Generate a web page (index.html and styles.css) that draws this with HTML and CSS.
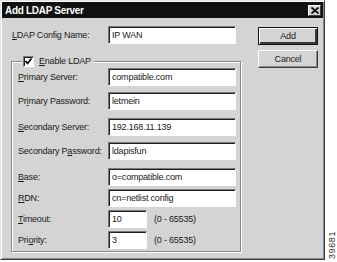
FILE: index.html
```html
<!doctype html>
<html>
<head>
<meta charset="utf-8">
<title>Add LDAP Server</title>
<link rel="stylesheet" href="styles.css">
</head>
<body>
<div class="page">
	<div class="dialog">
		<div class="titlebar">
			<span class="title">Add LDAP Server</span>
			<span class="close"><svg width="8" height="7" viewBox="0 0 8 7"><path d="M0.5 0.5 L7.5 6.5 M7.5 0.5 L0.5 6.5" stroke="#000" stroke-width="1.6"/></svg></span>
		</div>
		<div class="content">
			<div class="form">
				<div class="row top">
					<label><u>L</u>DAP Config Name:</label>
					<div class="field">IP WAN</div>
				</div>
				<fieldset class="group">
					<legend><span class="check"><svg width="9" height="9" viewBox="0 0 9 9"><path d="M1.5 4 L3.5 6.5 L7.5 1.5" fill="none" stroke="#000" stroke-width="1.7"/></svg></span><u>E</u>nable LDAP</legend>
					<div class="row first">
						<label><u>P</u>rimary Server:</label>
						<div class="field">compatible.com</div>
					</div>
					<div class="row">
						<label>Pr<u>i</u>mary Password:</label>
						<div class="field">letmein</div>
					</div>
					<div class="row sep">
						<label><u>S</u>econdary Server:</label>
						<div class="field">192.168.11.139</div>
					</div>
					<div class="row">
						<label>Secondary P<u>a</u>ssword:</label>
						<div class="field">ldapisfun</div>
					</div>
					<div class="row sep">
						<label><u>B</u>ase:</label>
						<div class="field">o=compatible.com</div>
					</div>
					<div class="row tight">
						<label><u>R</u>DN:</label>
						<div class="field">cn=netlist config</div>
					</div>
					<div class="row tight">
						<label><u>T</u>imeout:</label>
						<div class="field short">10</div>
						<span class="range">(0 - 65535)</span>
					</div>
					<div class="row tight">
						<label>Pri<u>o</u>rity:</label>
						<div class="field short">3</div>
						<span class="range">(0 - 65535)</span>
					</div>
				</fieldset>
			</div>
			<div class="buttons">
				<div class="btn default">Add</div>
				<div class="btn">Cancel</div>
			</div>
		</div>
	</div>
	<div class="figno">39681</div>
</div>
</body>
</html>
```
FILE: styles.css
```css
*{ margin:0; padding:0; box-sizing:border-box; }
body{ background:#fff; font-family:"Liberation Sans", Arial, sans-serif; font-size:9px; letter-spacing:-0.2px; color:#1a1a1a; }
.page{ display:flex; align-items:flex-end; }
.dialog{ width:327px; height:260px; background:#d4d4d4; border:1px solid; border-color:#e4e4e4 #3a3a3a #3a3a3a #e4e4e4; box-shadow:inset 1px 1px 0 #fff, inset -1px -1px 0 #8a8a8a; padding:0 1px 0 1px; display:flex; flex-direction:column; }
.titlebar{ height:16px; margin-top:1px; background:#111; display:flex; align-items:center; justify-content:space-between; padding:0 2px 0 3px; }
.title{ color:#fff; font-weight:bold; font-size:10px; letter-spacing:-0.3px; }
.close{ width:13px; height:11px; background:#d4d4d4; border:1px solid; border-color:#fff #404040 #404040 #fff; display:flex; align-items:center; justify-content:center; }
.content{ display:flex; padding:8px 0 0 9px; flex:1; }
.form{ width:230px; }
.row{ display:flex; align-items:center; height:18px; }
.row label{ width:90px; }
.row.top{ padding-left:1px; }
.row.top label{ width:96px; }
.field{ width:128px; height:18px; background:#fff; border:1px solid; border-color:#7a7a7a #fff #fff #7a7a7a; box-shadow:inset 1px 1px 0 #202020; padding:2px 0 0 3px; line-height:13px; white-space:nowrap; overflow:hidden; }
.field.short{ width:39px; }
.range{ margin-left:7px; }
.group{ margin-top:11px; border:1px solid #8a8a8a; box-shadow:1px 1px 0 #fff, inset 1px 1px 0 #fff; padding:0 4px 3px 6px; height:197px; }
.group legend{ margin-left:4px; padding:0 3px 0 1px; background:#d4d4d4; display:flex; align-items:center; height:12px; }
.check{ width:11px; height:11px; background:#fff; border:1px solid; border-color:#7a7a7a #fff #fff #7a7a7a; box-shadow:inset 1px 1px 0 #202020; display:flex; align-items:center; justify-content:center; margin-right:5px; }
.row.first{ margin-top:1px; }
.row + .row{ margin-top:6px; }
.row.sep{ margin-top:8px; }
.row.tight{ margin-top:3px; }
.buttons{ margin-left:17px; padding-top:1px; display:flex; flex-direction:column; gap:5px; }
.btn{ width:60px; height:18px; display:flex; align-items:center; justify-content:center; border:1px solid; border-color:#fff #3a3a3a #3a3a3a #fff; box-shadow:inset -1px -1px 0 #8a8a8a; }
.btn.default{ border:1px solid #111; box-shadow:inset 1px 1px 0 #fff, inset -2px -2px 0 #3a3a3a; }
.figno{ margin:0 0 1px 2px; writing-mode:vertical-rl; transform:rotate(180deg); font-size:9px; letter-spacing:0.6px; color:#333; }
```
